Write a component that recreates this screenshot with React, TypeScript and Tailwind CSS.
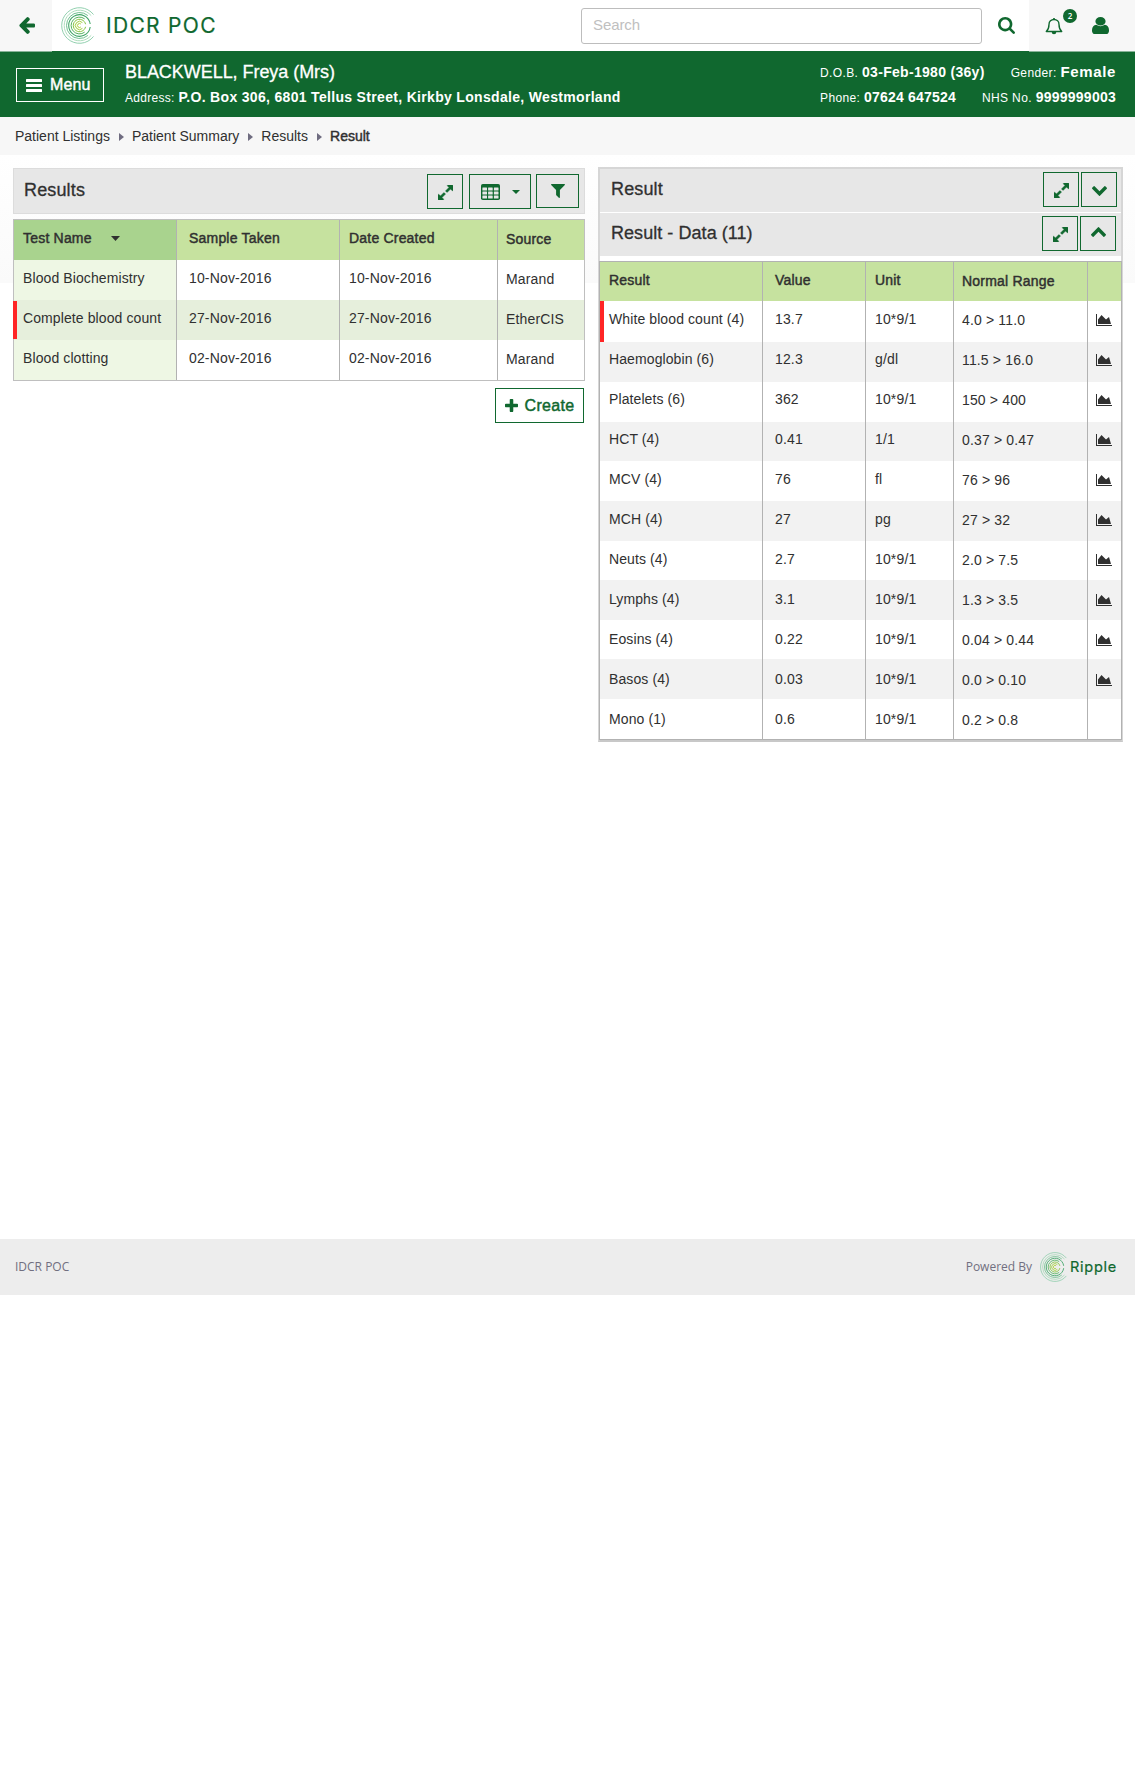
import React from "react";

type IconProps = { className?: string };

function Glyph({ box, d, className }: { box: string; d: string; className?: string }) {
  return (
    <svg viewBox={box} preserveAspectRatio="none" fill="currentColor" className={className} aria-hidden="true">
      <path d={d} />
    </svg>
  );
}

const ArrowLeft = ({ className }: IconProps) => (
  <Glyph
    className={className}
    box="64 180 1600 1560"
    d="M1664 896v128q0 53-32.5 90.5t-84.5 37.5h-704l293 294q38 36 38 90t-38 90l-75 76q-37 37-90 37-52 0-91-37l-651-652q-37-37-37-90 0-52 37-91l651-650q38-38 91-38 52 0 90 38l75 74q38 38 38 91t-38 91l-293 293h704q52 0 84.5 37.5t32.5 90.5z"
  />
);

const Search = ({ className }: IconProps) => (
  <Glyph
    className={className}
    box="64 128 1664 1664"
    d="M1216 832q0-185-131.5-316.5t-316.5-131.5-316.5 131.5-131.5 316.5 131.5 316.5 316.5 131.5 316.5-131.5 131.5-316.5zm512 832q0 52-38 90t-90 38q-54 0-90-38l-343-342q-179 124-399 124-143 0-273.5-55.5t-225-150-150-225-55.5-273.5 55.5-273.5 150-225 225-150 273.5-55.5 273.5 55.5 225 150 150 225 55.5 273.5q0 220-124 399l343 343q37 37 37 90z"
  />
);

const User = ({ className }: IconProps) => (
  <Glyph
    className={className}
    box="256 128 1280 1536"
    d="M1536 1399q0 109-62.5 187t-150.5 78h-854q-88 0-150.5-78t-62.5-187q0-85 8.5-160.5t31.5-152 58.5-131 94-89 134.5-34.5q131 128 313 128t313-128q76 0 134.5 34.5t94 89 58.5 131 31.5 152 8.5 160.5zm-256-887q0 159-112.5 271.5t-271.5 112.5-271.5-112.5-112.5-271.5 112.5-271.5 271.5-112.5 271.5 112.5 112.5 271.5z"
  />
);

const Bars = ({ className }: IconProps) => (
  <svg viewBox="0 0 16 13" fill="currentColor" className={className} aria-hidden="true">
    <rect width="16" height="3" rx="0.5" />
    <rect y="5" width="16" height="3" rx="0.5" />
    <rect y="10" width="16" height="3" rx="0.5" />
  </svg>
);

const Plus = ({ className }: IconProps) => (
  <Glyph
    className={className}
    box="192 128 1408 1408"
    d="M1600 736v192q0 40-28 68t-68 28h-416v416q0 40-28 68t-68 28h-192q-40 0-68-28t-28-68v-416h-416q-40 0-68-28t-28-68v-192q0-40 28-68t68-28h416v-416q0-40 28-68t68-28h192q40 0 68 28t28 68v416h416q40 0 68 28t28 68z"
  />
);

const Expand = ({ className }: IconProps) => (
  <svg
    viewBox="128 128 1536 1536"
    fill="currentColor"
    stroke="currentColor"
    strokeWidth="50"
    className={className}
    aria-hidden="true"
  >
    <path d="M883 1056q0 13-10 23l-332 332 144 144q19 19 19 45t-19 45-45 19h-448q-26 0-45-19t-19-45v-448q0-26 19-45t45-19 45 19l144 144 332-332q10-10 23-10t23 10l114 114q10 10 10 23zm781-864v448q0 26-19 45t-45 19-45-19l-144-144-332 332q-10 10-23 10t-23-10l-114-114q-10-10-10-23t10-23l332-332-144-144q-19-19-19-45t19-45 45-19h448q26 0 45 19t19 45z" />
  </svg>
);

const Filter = ({ className }: IconProps) => (
  <Glyph
    className={className}
    box="192 256 1408 1408"
    d="M1595 295q17 41-14 70l-493 493v742q0 42-39 59-13 5-25 5-27 0-45-19l-256-256q-19-19-19-45v-486l-493-493q-31-29-14-70 17-39 59-39h1280q42 0 59 39z"
  />
);

const Chevron = ({ className }: IconProps) => (
  <Glyph
    className={className}
    box="90 532 1612 1036"
    d="M1683 808l-742 741q-19 19-45 19t-45-19l-742-741q-19-19-19-45.5t19-45.5l166-165q19-19 45-19t45 19l531 531 531-531q19-19 45-19t45 19l166 165q19 19 19 45.5t-19 45.5z"
  />
);

const AreaChart = ({ className }: IconProps) => (
  <Glyph
    className={className}
    box="0 128 2048 1536"
    d="M2048 1536v128H0V128h128v1408h1920zM1664 512l256 896H256V832l448-576 576 576z"
  />
);

const TableIcon = ({ className }: IconProps) => (
  <svg viewBox="0 0 19 16" className={className} aria-hidden="true">
    <rect width="19" height="16" rx="1.8" fill="currentColor" />
    {[1.4, 7.1, 12.9].map((x) =>
      [3.6, 7.6, 11.6].map((y) => (
        <rect key={x + "-" + y} x={x} y={y} width="4.6" height="2.9" rx="0.3" fill="#e7e7e7" />
      )),
    )}
  </svg>
);

const Bell = ({ className }: IconProps) => (
  <svg viewBox="0 0 18 18" fill="none" className={className} aria-hidden="true">
    <path
      d="M1.3 14.5C3.5 12.4 4 10.4 4 7.4 4 4.4 6.200 2.500 9 2.500S14 4.400 14 7.400c0 3 .5 5 2.700 7.100z"
      stroke="currentColor"
      strokeWidth="1.4"
      strokeLinejoin="round"
    />
    <path d="M8.200 .9h1.600v1.600H8.200zM6.700 15h4.600a2.300 2.300 0 0 1-4.600 0z" fill="currentColor" />
  </svg>
);

/** Concentric open rings, each one gapped on its right side. */
const rings = [
  { r: 17.8, a: 38, c: "#86cba6", w: 0.9 },
  { r: 15.3, a: 40, c: "#a4d9b4", w: 0.9 },
  { r: 13, a: 50, c: "#62b985", w: 0.9 },
  { r: 10.8, a: 8, c: "#3fa566", w: 1.1 },
  { r: 8.4, a: 52, c: "#55b35f", w: 1 },
  { r: 6.2, a: 12, c: "#86c540", w: 1 },
  { r: 4.1, a: 45, c: "#a2cd3a", w: 1 },
  { r: 2, a: 48, c: "#a9cf38", w: 1 },
];

function RippleMark({ className }: IconProps) {
  return (
    <svg viewBox="-18.500 -18.500 37 37" fill="none" className={className} aria-hidden="true">
      {rings.map(({ r, a, c, w }) => {
        const t = (a * Math.PI) / 180;
        const x = r * Math.cos(t);
        const y = r * Math.sin(t);
        return <path key={r} d={`M${x} ${-y}A${r} ${r} 0 1 0 ${x} ${y}`} stroke={c} strokeWidth={w} />;
      })}
    </svg>
  );
}

function ToolButton({ className, children }: { className: string; children: React.ReactNode }) {
  return (
    <button className={"flex shrink-0 items-center justify-center border border-[#10682f] text-[#10682f] " + className}>
      {children}
    </button>
  );
}

const strong = "[-webkit-text-stroke:0.45px_currentColor]";

function Header() {
  return (
    <header className="flex h-[51px] items-center bg-white text-[#10682f]">
      <div className="relative flex h-[52px] w-[52px] items-center justify-center self-start border-b border-[#87b397] bg-[#f7f7f7]">
        <ArrowLeft className="h-[17px] w-[17px]" />
      </div>
      <RippleMark className="ml-[9px] h-[37px] w-[37px]" />
      <div className="ml-2 w-[115px] font-['Inter',sans-serif] text-[21px] leading-none font-normal tracking-[1.3px] whitespace-nowrap [-webkit-text-stroke:0.2px_currentColor]">
        IDCR POC
      </div>
      <div className="ml-auto flex h-9 w-[401px] items-center rounded-[3px] border border-[#bdbdbd] pl-[11px] text-[15px] tracking-[-0.1px] text-[#c0c0c0]">
        Search
      </div>
      <Search className="mr-[14px] ml-4 h-[17px] w-[17px]" />
      <div className="relative flex h-[52px] w-[106px] items-center self-start border-b border-[#87b397] bg-[#f7f7f7] pl-4">
        <Bell className="h-[18px] w-[18px]" />
        <span className="absolute top-[9px] left-[34px] flex h-[14px] w-[14px] items-center justify-center rounded-full bg-[#10682f] font-['Open_Sans',sans-serif] text-[8px] leading-none font-semibold text-white">
          2
        </span>
        <User className="ml-[29px] h-[17px] w-[17px]" />
      </div>
    </header>
  );
}

function PatientBar() {
  return (
    <section className="flex h-[66px] bg-[#10682f] text-white">
      <button className="mt-[17px] ml-4 flex h-[34px] w-[88px] items-center border border-white pl-[9px]">
        <Bars className="h-[13px] w-4" />
        <span className={"ml-2 text-[16px] " + strong}>Menu</span>
      </button>
      <div className="ml-[21px] pt-[9px]">
        <h1 className="text-[18px] leading-6 tracking-[-0.05px] [-webkit-text-stroke:0.3px_currentColor]">
          BLACKWELL, Freya (Mrs)
        </h1>
        <p className="pt-[3px] text-[12px] leading-5 tracking-[0.3px]">
          Address: <b className="text-[14px] tracking-[0.32px]">P.O. Box 306, 6801 Tellus Street, Kirkby Lonsdale, Westmorland</b>
        </p>
      </div>
      <div className="mr-[19px] ml-auto w-[296px] pt-[9px] text-[12px] leading-6 tracking-[0.38px] whitespace-nowrap">
        <p className="flex items-baseline justify-between">
          <span>
            D.O.B. <b className="text-[14px] tracking-[0.3px]">03-Feb-1980 (36y)</b>
          </span>
          <span>
            Gender: <b className="text-[15px] tracking-[0.65px]">Female</b>
          </span>
        </p>
        <p className="flex items-baseline justify-between">
          <span>
            Phone: <b className="text-[14px] tracking-[0.2px]">07624 647524</b>
          </span>
          <span>
            NHS No. <b className="text-[14px] tracking-[0.25px]">9999999003</b>
          </span>
        </p>
      </div>
    </section>
  );
}

function Breadcrumbs() {
  const sep = (
    <svg viewBox="0 0 5 8" className="mr-[8px] ml-[9px] h-[8px] w-[5px]" aria-hidden="true">
      <path d="M0 0L5 4 0 8z" fill="#6f6c80" />
    </svg>
  );
  return (
    <nav className="flex h-[38px] items-center bg-[#f7f7f7] pt-px pl-[15px] text-[14px] tracking-normal">
      Patient Listings{sep}Patient Summary{sep}Results{sep}
      <span className={strong}>Result</span>
    </nav>
  );
}

const tests = [
  { name: "Blood Biochemistry", date: "10-Nov-2016", source: "Marand" },
  { name: "Complete blood count", date: "27-Nov-2016", source: "EtherCIS", active: true },
  { name: "Blood clotting", date: "02-Nov-2016", source: "Marand" },
];

function ResultsPanel() {
  const cols = "grid grid-cols-[163px_163px_158px_86px]";
  return (
    <section className="w-[572px]">
      <div className="flex h-[46px] items-start border border-[#dcdcdc] bg-[#e7e7e7] pt-[5px] pr-[5px] pl-[10px]">
        <h2 className="mr-auto pt-[4px] text-[18px] leading-6 [-webkit-text-stroke:0.3px_currentColor]">Results</h2>
        <ToolButton className="h-[35px] w-9">
          <Expand className="mt-px h-[15px] w-[15px]" />
        </ToolButton>
        <ToolButton className="ml-1.5 h-[35px] w-[62px]">
          <TableIcon className="h-4 w-[19px]" />
          <svg viewBox="0 0 8 4" className="ml-3 h-1 w-2" aria-hidden="true">
            <path d="M0 0h8L4 4z" fill="currentColor" />
          </svg>
        </ToolButton>
        <ToolButton className="ml-[5px] h-[34px] w-[43px]">
          <Filter className="h-[14px] w-[14px]" />
        </ToolButton>
      </div>
      <div className="mt-[5px] h-[162px] border border-[#bfbfbf]">
        <div className={cols + " h-[40px] bg-[#c6e29f] leading-5 tracking-[0.2px] " + strong}>
          <div className="flex border-r border-[#b2b2b2] bg-[#a9d38e] pt-2 pl-[9px]">
            Test Name
            <svg viewBox="0 0 9 5" className="mt-2 ml-[19px] h-[5px] w-[9px]" aria-hidden="true">
              <path d="M0 0h9L4.500 5z" fill="#303030" />
            </svg>
          </div>
          <div className="border-r border-[#b2b2b2] pt-2 pl-3">Sample Taken</div>
          <div className="border-r border-[#b2b2b2] pt-2 pl-[9px]">Date Created</div>
          <div className="pt-[9px] pl-[8px]">Source</div>
        </div>
        {tests.map((t) => (
          <div key={t.name} className={cols + " h-[40px] leading-5 " + (t.active ? "bg-[#e6efdc]" : "bg-white")}>
            <div
              className={
                "relative border-r border-[#b2b2b2] pt-2 pl-[9px] tracking-[0.1px] whitespace-nowrap " +
                (t.active ? "bg-[#e6efdc]" : "bg-[#eef7e4]")
              }
            >
              {t.active && <span className="absolute top-px -left-px h-[38px] w-1 bg-[#ff2525]" />}
              {t.name}
            </div>
            <div className="border-r border-[#b2b2b2] pt-2 pl-3">{t.date}</div>
            <div className="border-r border-[#b2b2b2] pt-2 pl-[9px]">{t.date}</div>
            <div className="pt-[9px] pl-[8px]">{t.source}</div>
          </div>
        ))}
      </div>
      <div className="mt-[7px] flex justify-end pr-px">
        <ToolButton className="h-[35px] w-[89px]">
          <Plus className="h-[13px] w-[13px]" />
          <span className={"ml-[7px] text-[16px] tracking-[0.3px] " + strong}>Create</span>
        </ToolButton>
      </div>
    </section>
  );
}

/* The striping is 39.7px high on average, so each row carries its own height and inset. */
const data = [
  { row: "h-[41px] pt-[8px]", v: ["White blood count (4)", "13.7", "10*9/1", "4.0 > 11.0"] },
  { row: "h-[40px] pt-[7px]", v: ["Haemoglobin (6)", "12.3", "g/dl", "11.5 > 16.0"] },
  { row: "h-[40px] pt-[7px]", v: ["Platelets (6)", "362", "10*9/1", "150 > 400"] },
  { row: "h-[39px] pt-[7px]", v: ["HCT (4)", "0.41", "1/1", "0.37 > 0.47"] },
  { row: "h-[40px] pt-[8px]", v: ["MCV (4)", "76", "fl", "76 > 96"] },
  { row: "h-[40px] pt-[8px]", v: ["MCH (4)", "27", "pg", "27 > 32"] },
  { row: "h-[39px] pt-[8px]", v: ["Neuts (4)", "2.7", "10*9/1", "2.0 > 7.5"] },
  { row: "h-[40px] pt-[9px]", v: ["Lymphs (4)", "3.1", "10*9/1", "1.3 > 3.5"] },
  { row: "h-[39px] pt-[9px]", v: ["Eosins (4)", "0.22", "10*9/1", "0.04 > 0.44"] },
  { row: "h-[40px] pt-[10px]", v: ["Basos (4)", "0.03", "10*9/1", "0.0 > 0.10"] },
  { row: "h-[40px] pt-[10px]", v: ["Mono (1)", "0.6", "10*9/1", "0.2 > 0.8"] },
];

function DataRow({ row, v, index }: { row: string; v: string[]; index: number }) {
  const line = "border-r border-[#b2b2b2] whitespace-nowrap ";
  const cell = line + row;
  return (
    <div className={"grid grid-cols-[163px_103px_88px_134px_34px] leading-5 " + (index % 2 ? "bg-[#f2f2f2]" : "bg-white")}>
      <div className={cell + " relative pl-[9px] tracking-[0.1px]"}>
        {index === 0 && <span className="absolute top-0 left-0 h-[41px] w-1 bg-[#ff2525]" />}
        {v[0]}
      </div>
      <div className={cell + " pl-3"}>{v[1]}</div>
      <div className={cell + " pl-[9px]"}>{v[2]}</div>
      <div className={cell + " pl-2"}>
        <div className="pt-px">{v[3]}</div>
      </div>
      <div className={row}>
        {index < 10 && <AreaChart className="mt-[5px] ml-[8px] h-3 w-4 text-[#303030]" />}
      </div>
    </div>
  );
}

function ResultPanel() {
  const head = "border-r border-[#b2b2b2] pt-2 ";
  return (
    <section className="mt-[-1px] w-[525px] border-2 border-[#d6d6d6] border-b-[#c8c8c8] bg-white">
      <div className="flex h-[43px] items-start bg-[#e7e7e7] pt-[3px] pr-1 pl-[11px]">
        <h2 className="mr-auto pt-[5px] text-[18px] leading-6 [-webkit-text-stroke:0.3px_currentColor]">Result</h2>
        <ToolButton className="h-[35px] w-9">
          <Expand className="mt-px h-[15px] w-[15px]" />
        </ToolButton>
        <ToolButton className="ml-0.5 h-[35px] w-9">
          <Chevron className="mt-0.5 h-[10px] w-[15px]" />
        </ToolButton>
      </div>
      <div className="flex h-[44px] items-start border-t border-white bg-[#e7e7e7] pt-[3px] pr-[5px] pl-[11px]">
        <h2 className="mr-auto pt-[5px] text-[18px] leading-6 tracking-[0.05px] [-webkit-text-stroke:0.3px_currentColor]">
          Result - Data (11)
        </h2>
        <ToolButton className="h-[35px] w-9">
          <Expand className="mt-px h-[15px] w-[15px]" />
        </ToolButton>
        <ToolButton className="ml-0.5 h-[35px] w-9">
          <Chevron className="-mt-1 h-[10px] w-[15px] rotate-180" />
        </ToolButton>
      </div>
      <div className="mt-[5px] -mr-px -ml-px border border-[#b2b2b2] bg-white">
        <div
          className={
            "grid h-[39px] grid-cols-[163px_103px_88px_134px_34px] bg-[#c6e29f] leading-5 tracking-[0.2px] " + strong
          }
        >
          <div className={head + "pl-[9px]"}>Result</div>
          <div className={head + "pl-3"}>Value</div>
          <div className={head + "pl-[9px]"}>Unit</div>
          <div className="border-r border-[#b2b2b2] pt-[9px] pl-2">Normal Range</div>
        </div>
        {data.map((d, i) => (
          <DataRow key={d.v[0]} row={d.row} v={d.v} index={i} />
        ))}
      </div>
    </section>
  );
}

export default function App() {
  return (
    <div className="min-h-[1790px] w-[1135px] bg-white font-['Liberation_Sans',Arial,sans-serif] text-[14px] tracking-[0.15px] text-[#303030]">
      <Header />
      <PatientBar />
      <Breadcrumbs />
      <main className="flex h-[1084px] items-start gap-[13px] bg-[linear-gradient(#fff,#fafafa)] bg-[length:100%_128px] bg-no-repeat pt-[13px] pl-[13px]">
        <ResultsPanel />
        <ResultPanel />
      </main>
      <footer className="flex h-14 items-center bg-[#ededed] pr-[17px] pl-[15px] font-['Open_Sans',sans-serif] text-[12px] tracking-normal text-[#716f80]">
        <span>IDCR POC</span>
        <span className="ml-auto">Powered By</span>
        <RippleMark className="ml-2 h-[30px] w-[30px]" />
        <span className="w-[48px] font-['Inter',sans-serif] text-[14.5px] leading-none font-normal tracking-[0.75px] text-[#10682f] [-webkit-text-stroke:0.2px_currentColor]">
          Ripple
        </span>
      </footer>
    </div>
  );
}
